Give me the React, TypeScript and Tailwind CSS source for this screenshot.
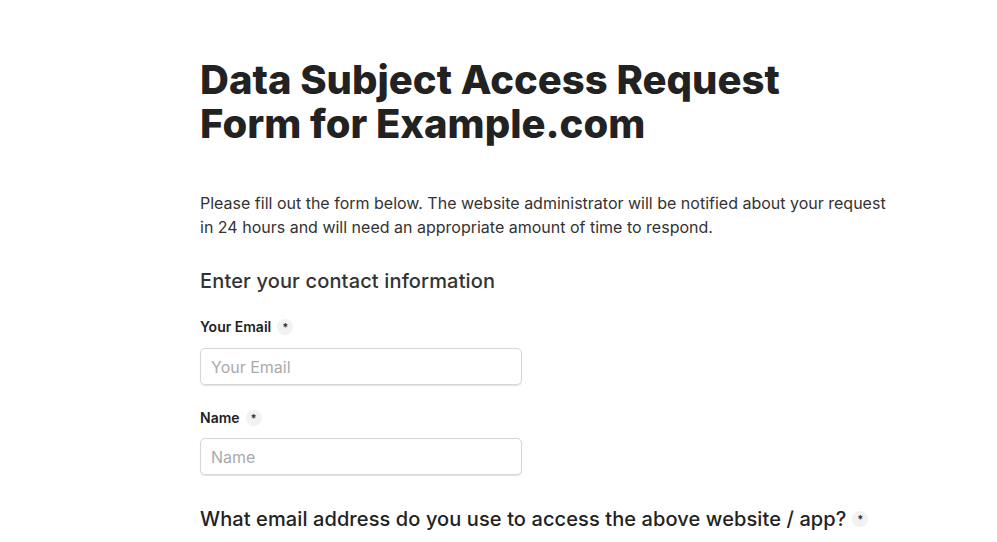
import React from "react";

function Req() {
  return (
    <span className="ml-[6px] inline-flex h-[16px] w-[16px] items-center justify-center rounded-full bg-[#f2f2f2] align-middle text-[11px] font-bold leading-none text-[#333]">
      *
    </span>
  );
}

export default function App() {
  return (
    <div className="min-h-screen bg-white" style={{ fontFamily: "Inter, 'Noto Sans', sans-serif" }}>
      <div className="ml-[200px] w-[700px] pt-[58px] text-[#222]">
        <h1 className="text-[40px] font-extrabold leading-[44px] text-[#222]">
          Data Subject Access Request
          <br />
          Form for Example.com
        </h1>
        <p className="mt-[45px] text-[16px] leading-[24px] text-[#333]">
          Please fill out the form below. The website administrator will be notified about your request in 24 hours and will need an appropriate amount of time to respond.
        </p>
        <h2 className="mt-[28px] text-[20px] font-medium leading-[28px] tracking-[0.15px] text-[#333]">
          Enter your contact information
        </h2>
        <div className="mt-[22px]">
          <label className="flex items-center text-[14px] font-semibold leading-[20px] text-[#222]">
            Your Email
            <Req />
          </label>
          <input
            placeholder="Your Email"
            className="mt-[11px] block h-[37px] w-[322px] rounded-[5px] border border-[#d6d6d6] px-[10px] text-[16px] text-[#333] shadow-[0_1px_1px_rgba(0,0,0,0.12)] outline-none placeholder:text-[#aaa]"
          />
        </div>
        <div className="mt-[23px]">
          <label className="flex items-center text-[14px] font-semibold leading-[20px] text-[#222]">
            Name
            <Req />
          </label>
          <input
            placeholder="Name"
            className="mt-[10px] block h-[37px] w-[322px] rounded-[5px] border border-[#d6d6d6] px-[10px] text-[16px] text-[#333] shadow-[0_1px_1px_rgba(0,0,0,0.12)] outline-none placeholder:text-[#aaa]"
          />
        </div>
        <h2 className="mt-[30px] flex items-center text-[20px] font-medium leading-[28px] tracking-[0.1px] text-[#222]">
          What email address do you use to access the above website / app?
          <Req />
        </h2>
      </div>
    </div>
  );
}
